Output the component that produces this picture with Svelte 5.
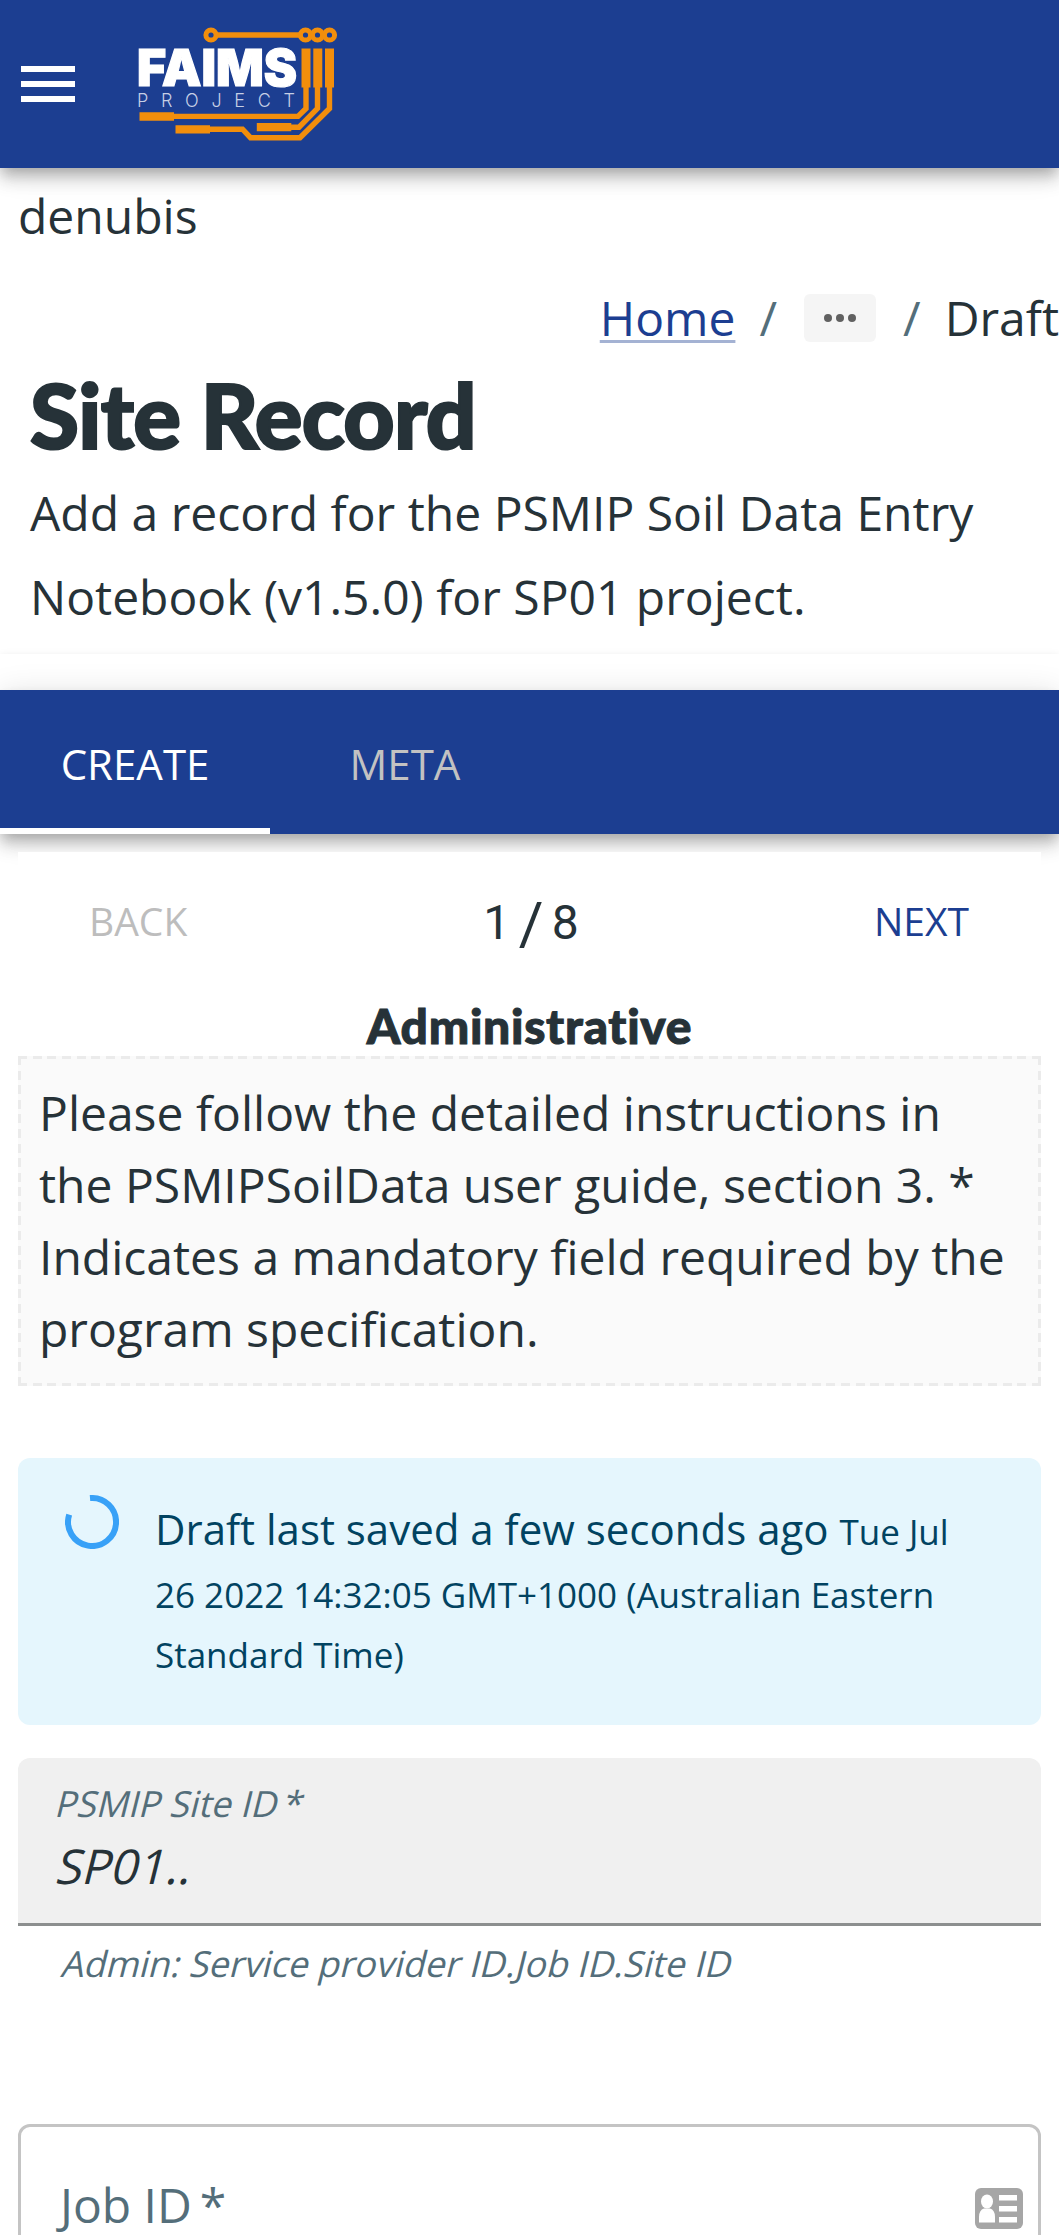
<script>
  const paragraphs = {
    description: 'Add a record for the PSMIP Soil Data Entry Notebook (v1.5.0) for SP01 project.',
    instructions:
      'Please follow the detailed instructions in the PSMIPSoilData user guide, section 3. * Indicates a mandatory field required by the program specification.'
  };
</script>

<div class="page">
  <header class="appbar">
    <svg class="menu" viewBox="0 0 54 36" aria-label="Menu"><path d="M0 0h54v6H0zM0 15h54v6H0zM0 30h54v6H0z" /></svg>
    <svg class="logo" viewBox="135 24 210 120" aria-label="FAIMS Project">
      <g class="trace">
        <path d="M211 35H330" />
        <path d="M306 86V108.500L298 116.400H172" />
        <path d="M317.500 86V108.500L299 127.200H289" />
        <path d="M329.500 86V108.500L300 137.700H250.500L242.500 129.200H208" />
      </g>
      <g class="pad">
        <path d="M301.500 48.500h9V87.500h-9zM313.300 48.500h9V87.500h-9zM325 48.500h9V87.500h-9z" />
        <path d="M139.500 112.300h34.500v8.400h-34.500zM256.800 123h34.500v8.200h-34.500zM175.500 125.200h34.500v8.200h-34.500z" />
      </g>
      <g class="ring">
        <circle cx="211" cy="35" r="5.100" />
        <circle cx="305.500" cy="35" r="5.100" />
        <circle cx="317.500" cy="35" r="5.100" />
        <circle cx="329.500" cy="35" r="5.100" />
      </g>
      <text class="name" x="137" y="86" textLength="160" lengthAdjust="spacingAndGlyphs">FAIMS</text>
      <text class="sub" x="137" y="107" textLength="158">PROJECT</text>
    </svg>
  </header>

  <main>
    <div class="intro">
      <div class="user">denubis</div>
      <nav class="crumbs">
        <a href="#home">Home</a>
        <span class="sep">/</span>
        <button class="more" aria-label="Show path">
          <svg viewBox="0 0 32 8"><circle cx="4" cy="4" r="4" /><circle cx="16" cy="4" r="4" /><circle cx="28" cy="4" r="4" /></svg>
        </button>
        <span class="sep">/</span>
        <span>Draft</span>
      </nav>
      <h1>Site Record</h1>
      <p class="desc">{paragraphs.description}</p>
    </div>

    <div class="record">
      <div class="tabs">
        <div class="tab active">CREATE</div>
        <div class="tab">META</div>
      </div>

      <section class="panel">
        <div class="stepper">
          <span class="back">BACK</span>
          <span class="count">1 <span class="slash">/</span> 8</span>
          <span class="next">NEXT</span>
        </div>
        <h2>Administrative</h2>
        <div class="note">{paragraphs.instructions}</div>

        <div class="alert">
          <svg class="spinner" viewBox="0 0 54 54"><path d="M25 3.100A24 24 0 1 1 4.200 19.700" /></svg>
          <div class="message">
            <span class="lead">Draft last saved a few seconds ago</span>
            <small>Tue Jul 26 2022 14:32:05 GMT+1000 (Australian Eastern Standard Time)</small>
          </div>
        </div>

        <div class="filled">
          <div class="label oblique">PSMIP Site ID<span class="star">*</span></div>
          <div class="value oblique">SP01..</div>
        </div>
        <div class="helper"><div class="oblique">Admin: Service provider ID.Job ID.Site ID</div></div>

        <div class="outlined">
          <div class="joblabel">Job ID<span class="star">*</span></div>
          <svg class="card" viewBox="0 0 48 41">
            <rect class="body" width="48" height="41" rx="6" />
            <ellipse cx="12" cy="13.500" rx="6" ry="7" />
            <path d="M4 34.500V29q0-7 5-8.500h6q5 1.500 5 8.500v5.500zM24 7h18v5.500H24zM24 18h18v5.500H24zM24 29h18v5.500H24z" />
          </svg>
        </div>
      </section>
    </div>
  </main>
</div>

<style>
  :global(body) { background: #fff; overflow: hidden; }
  .page {
    width: 1059px;
    height: 2235px;
    overflow: hidden;
    color: #263238;
    font-family: 'Open Sans', 'Noto Sans', sans-serif;
    font-size: 48px;
    line-height: 72px;
  }
  .appbar {
    height: 168px;
    box-sizing: border-box;
    position: relative;
    padding-left: 21px;
    display: flex;
    align-items: center;
    background: #1c3e91;
    box-shadow: 0 6px 12px -3px rgba(0, 0, 0, 0.2), 0 12px 15px rgba(0, 0, 0, 0.14), 0 3px 30px rgba(0, 0, 0, 0.12);
  }
  .menu { width: 54px; height: 36px; fill: #fff; }
  .logo { width: 210px; height: 120px; margin-left: 60px; }
  .trace { fill: none; stroke: #f28e0c; stroke-width: 5.4; }
  .pad { fill: #f28e0c; }
  .ring { fill: #1c3e91; stroke: #f28e0c; stroke-width: 5; }
  .name { font: 900 51px Inter, sans-serif; fill: #fff; stroke: #fff; stroke-width: 1.2; }
  .sub { font: 300 18px Inter, sans-serif; fill: #c6cfe5; }

  .intro { height: 486px; box-sizing: border-box; }
  .user { padding: 12px 18px 0; }
  .crumbs { display: flex; justify-content: flex-end; align-items: center; margin-top: 30px; height: 72px; }
  .crumbs a { color: #1c3e91; text-decoration: underline; text-decoration-color: #a4b2d3; text-decoration-thickness: 3px; text-underline-offset: 4px; }
  .sep { margin: 0 24px; color: #546e7a; }
  .more { width: 72px; height: 48px; margin: 0 3px; padding: 0; border: 0; border-radius: 6px; background: #f5f5f5; display: flex; align-items: center; justify-content: center; }
  .more svg { width: 32px; height: 8px; fill: #616161; }
  h1 { margin: 6px 30px 0; height: 111px; font: 900 89px/110px 'Lato Black', Lato, sans-serif; letter-spacing: -0.7px; -webkit-text-stroke: 2.2px #263238; }
  .desc { margin: 0 30px; line-height: 84px; width: 980px; }

  .record { padding-top: 36px; box-shadow: 0 3px 9px rgba(0, 0, 0, 0.12); }
  .tabs {
    height: 144px;
    display: flex;
    background: #1c3e91;
    font-size: 42px;
    box-shadow: 0 6px 12px -3px rgba(0, 0, 0, 0.2), 0 12px 15px rgba(0, 0, 0, 0.14), 0 3px 30px rgba(0, 0, 0, 0.12);
  }
  .tab { width: 270px; box-sizing: border-box; padding-top: 38px; text-align: center; color: #c2c2c2; }
  .active { color: #fff; border-bottom: 6px solid #fff; }

  .panel { position: relative; margin: 18px 18px 0; background: #fff; }
  .stepper { height: 138px; display: flex; align-items: center; justify-content: space-between; padding: 0 72px 0 71px; font-size: 39px; }
  .back { color: #bdbdbd; }
  .next { color: #1c3e91; }
  .count { padding-top: 3px; font: 400 48px/72px Roboto, sans-serif; letter-spacing: -0.8px; }
  .slash { display: inline-block; font-size: 60px; line-height: 60px; vertical-align: -5px; margin: 0 -2px; }
  h2 { margin: 0; height: 66px; font: 900 48px/72px 'Lato Black', Lato, sans-serif; letter-spacing: 0.7px; text-align: center; -webkit-text-stroke: 1px #263238; }
  .note {
    --dash-x: repeating-linear-gradient(90deg, #ebebeb 0 9px, transparent 9px 14.696px);
    --dash-y: repeating-linear-gradient(180deg, #ebebeb 0 9px, transparent 9px 14.59px);
    box-sizing: border-box;
    height: 330px;
    padding: 21px;
    background: var(--dash-x) top / 100% 3px no-repeat, var(--dash-x) bottom / 100% 3px no-repeat,
      var(--dash-y) left / 3px 100% no-repeat, var(--dash-y) right / 3px 100% no-repeat, #fafafa;
  }

  .alert { margin-top: 72px; box-sizing: border-box; height: 267px; padding: 37px 46px; display: flex; gap: 36px; border-radius: 12px; background: #e5f6fd; color: #014361; }
  .spinner { flex: none; width: 54px; height: 54px; margin-left: 1px; fill: none; stroke: #38a1f7; stroke-width: 6; }
  .message { width: 830px; padding-top: 1px; font-size: 42px; line-height: 60px; }
  .lead { line-height: 66px; }
  .message small { font-size: 35px; line-height: 48px; }

  .filled { margin-top: 33px; height: 168px; box-sizing: border-box; padding: 22px 36px 0; border-bottom: 3px solid #8c8f8f; border-radius: 12px 12px 0 0; background: #f0f0f0; }
  .oblique { transform: skewX(-14deg); transform-origin: 0 75%; }
  .label { font-size: 36px; line-height: 48px; color: #546e7a; }
  .star { margin-left: 8px; }
  .label .star { margin-left: 5px; }
  .value { padding-top: 2px; line-height: 72px; }
  .helper { padding: 13px 42px 0; font-size: 36px; line-height: 50px; color: #546e7a; }
  .outlined { margin-top: 135px; height: 168px; box-sizing: border-box; padding: 0 15px 0 39px; border: 3px solid #c4c4c4; border-radius: 12px; display: flex; align-items: center; justify-content: space-between; color: #546e7a; }
  .joblabel { padding-bottom: 6px; }
  .card { width: 48px; height: 41px; fill: #fff; }
  .card .body { fill: #a6a6a6; }
</style>
